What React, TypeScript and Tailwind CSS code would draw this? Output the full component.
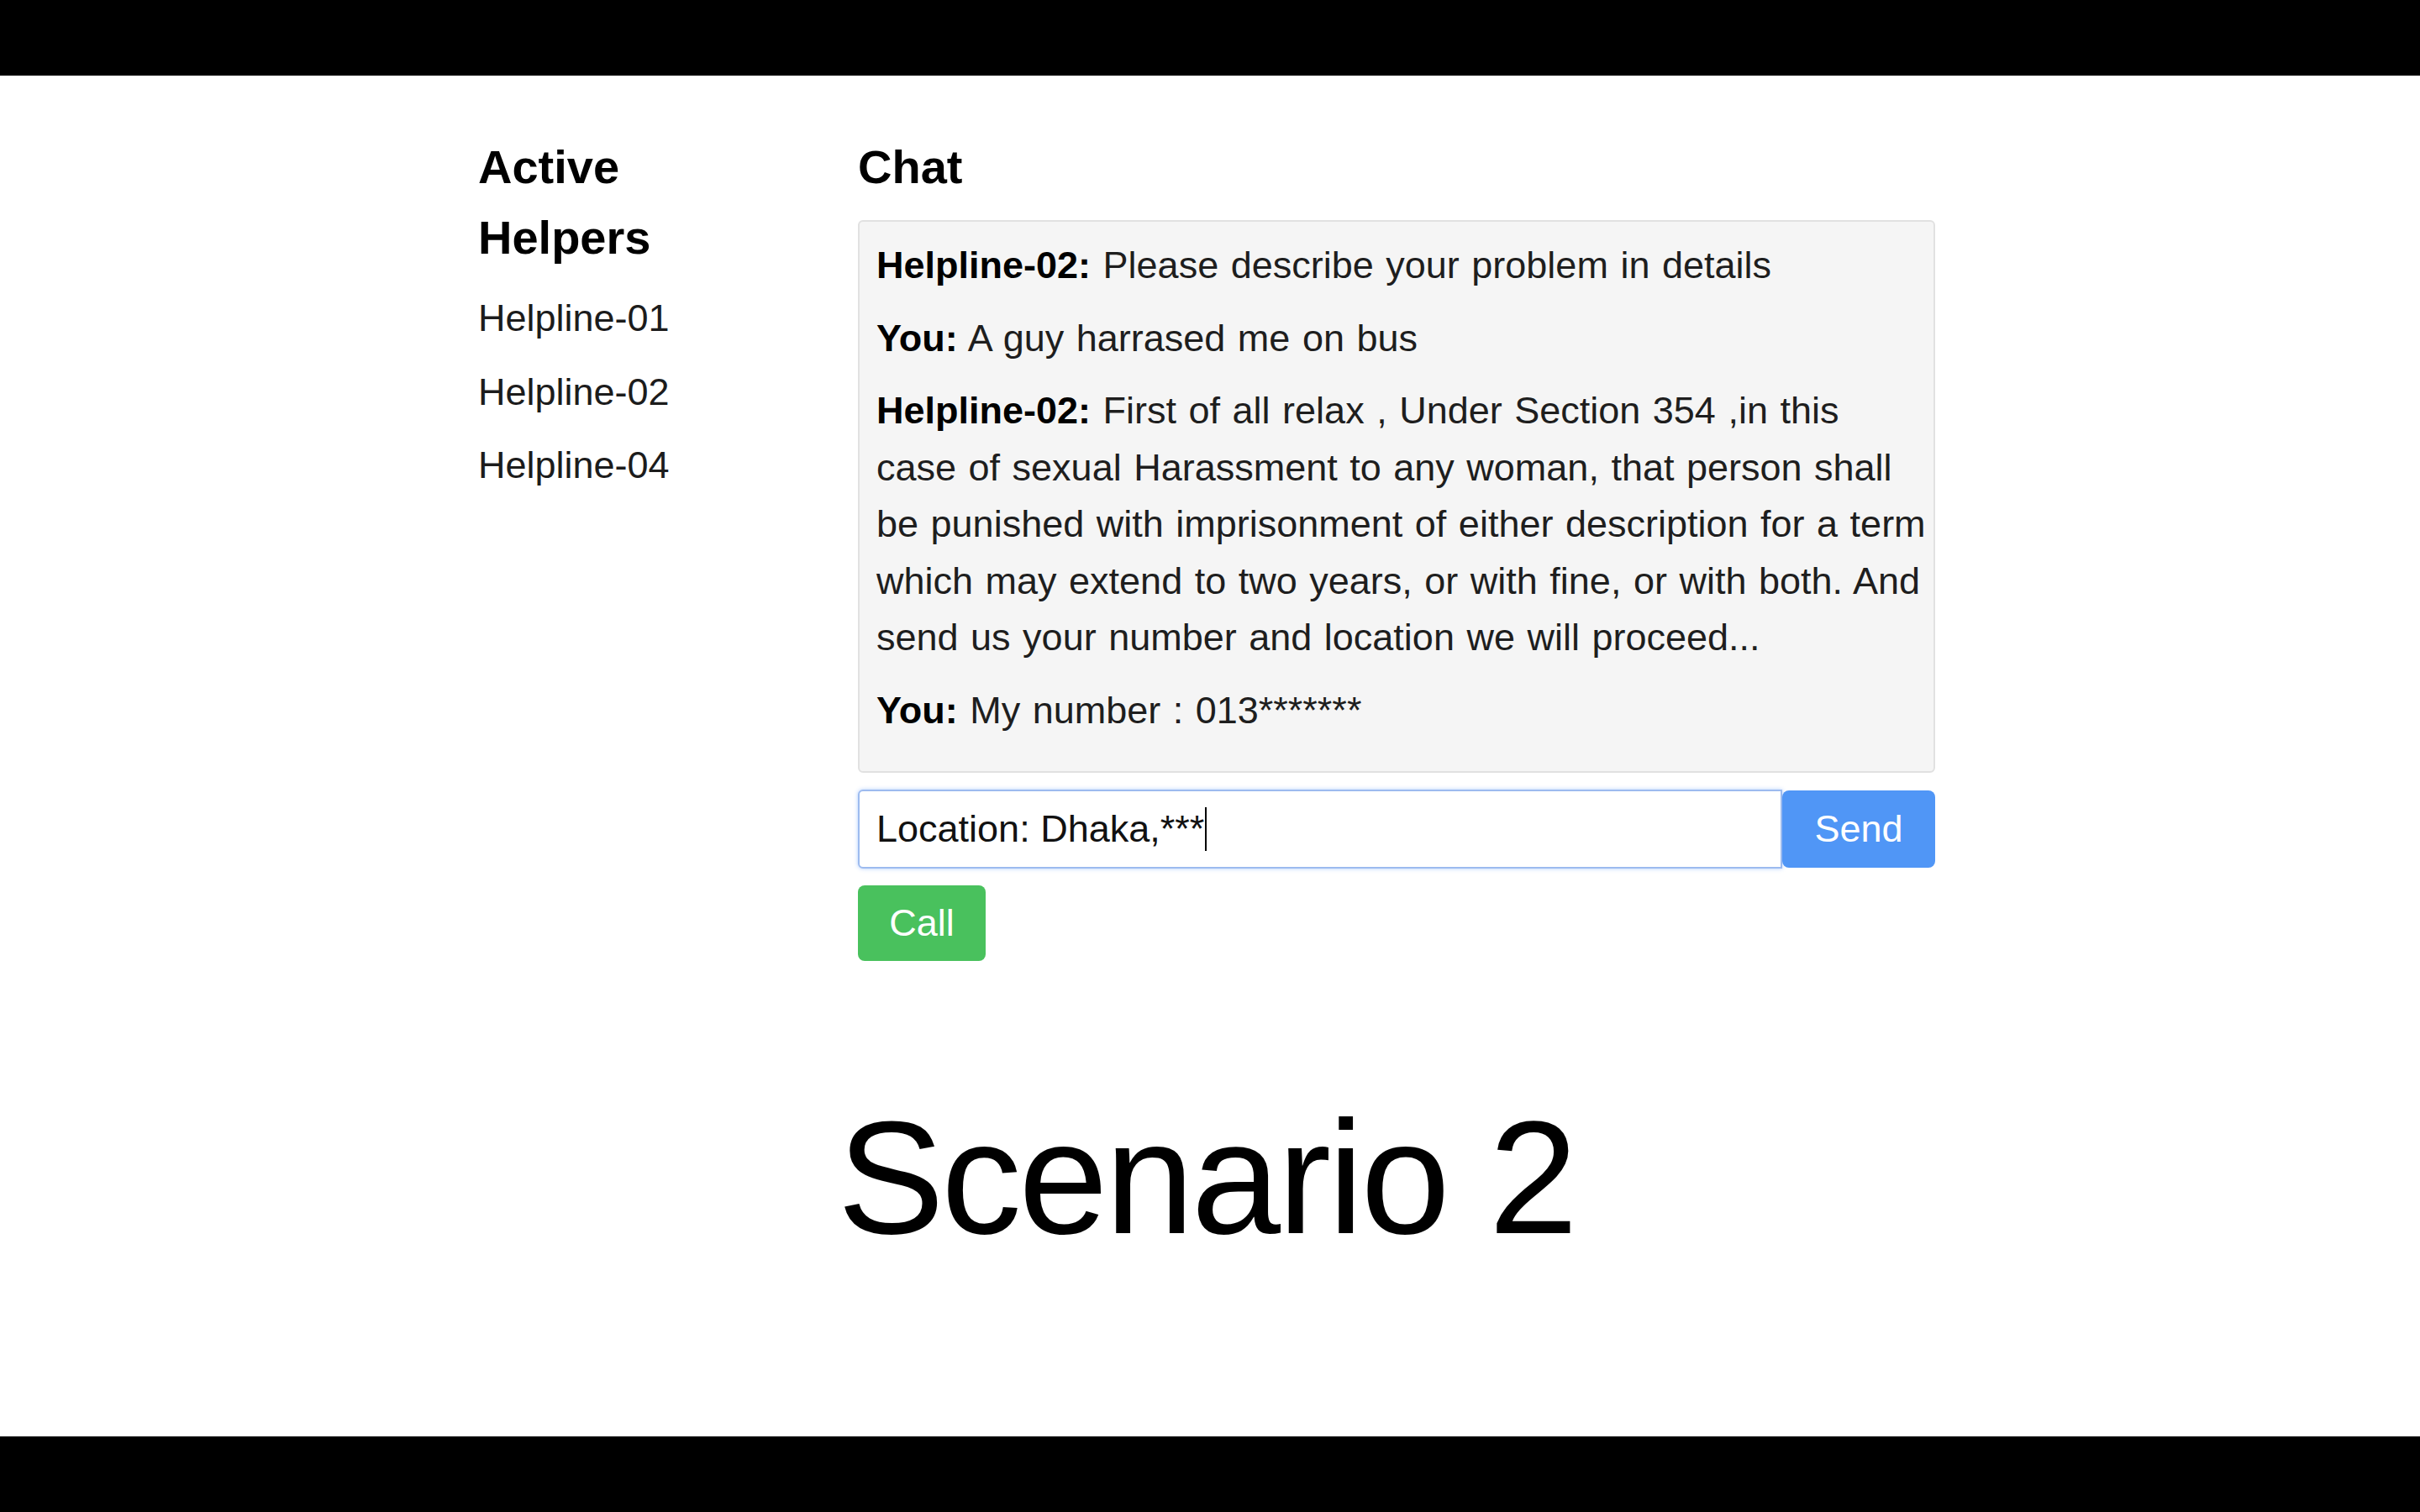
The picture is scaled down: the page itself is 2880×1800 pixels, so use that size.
import React from 'react';

const helpers = ['Helpline-01', 'Helpline-02', 'Helpline-04'];

const messages = [
  { from: 'Helpline-02:', text: 'Please describe your problem in details' },
  { from: 'You:', text: 'A guy harrased me on bus' },
  {
    from: 'Helpline-02:',
    text: 'First of all relax , Under Section 354 ,in this case of sexual Harassment to any woman, that person shall be punished with imprisonment of either description for a term which may extend to two years, or with fine, or with both. And send us your number and location we will proceed...',
  },
  { from: 'You:', text: 'My number : 013*******' },
];

export default function App() {
  return (
    <div className="flex flex-col w-full h-[1800px] bg-white font-['Liberation_Sans',Arial,sans-serif]">
      <div className="h-[90px] bg-black shrink-0" />

      <main className="flex-1 flex flex-col">
        {/* Helpers + chat */}
        <div className="flex ml-[569px] pt-[67px] gap-[82px]">
          <aside className="w-[370px] shrink-0">
            <h3 className="text-[56px] leading-[84px] font-bold text-black">Active Helpers</h3>
            <ul className="mt-[20px] flex flex-col gap-[20px]">
              {helpers.map(h => (
                <li key={h} className="text-[45px] leading-[67.5px] text-[#1c1c1c]">{h}</li>
              ))}
            </ul>
          </aside>

          <section className="w-[1282px] shrink-0">
            <h3 className="text-[56px] leading-[84px] font-bold text-black">Chat</h3>
            <div className="mt-[21px] bg-[#f5f5f5] border-2 border-[#e1e1e1] rounded-[6px] pl-[20px] pr-[6px] pt-[18px] pb-[20px]">
              {messages.map((m, i) => (
                <p key={i} className="mb-[19px] text-[45px] leading-[67.5px] [word-spacing:2px] text-[#1e1e1e]">
                  <strong className="font-bold text-black">{m.from}</strong> {m.text}
                </p>
              ))}
            </div>

            <div className="mt-[20px] flex items-center">
              <div className="flex-1 h-[94px] flex items-center bg-white border-2 border-[#9dbbef] rounded-l-[6px] px-[20px] shadow-[0_0_5px_rgba(77,144,254,0.45)]">
                <span className="text-[45px] leading-[67.5px] text-[#111]">Location: Dhaka,***</span>
                <span className="ml-[1px] w-[2px] h-[52px] bg-black" />
              </div>
              <button className="w-[182px] h-[92px] bg-[#5096f6] rounded-[8px] text-white text-[45px] leading-[67.5px]">
                Send
              </button>
            </div>

            <button className="mt-[20px] w-[152px] h-[90px] bg-[#49c15d] rounded-[8px] text-white text-[45px] leading-[67.5px]">
              Call
            </button>
          </section>
        </div>

        <div className="mt-[162px] pr-[9px] text-center">
          <span className="text-[191px] leading-none tracking-[-3.5px] text-black">Scenario 2</span>
        </div>
      </main>

      <div className="h-[90px] bg-black shrink-0" />
    </div>
  );
}
